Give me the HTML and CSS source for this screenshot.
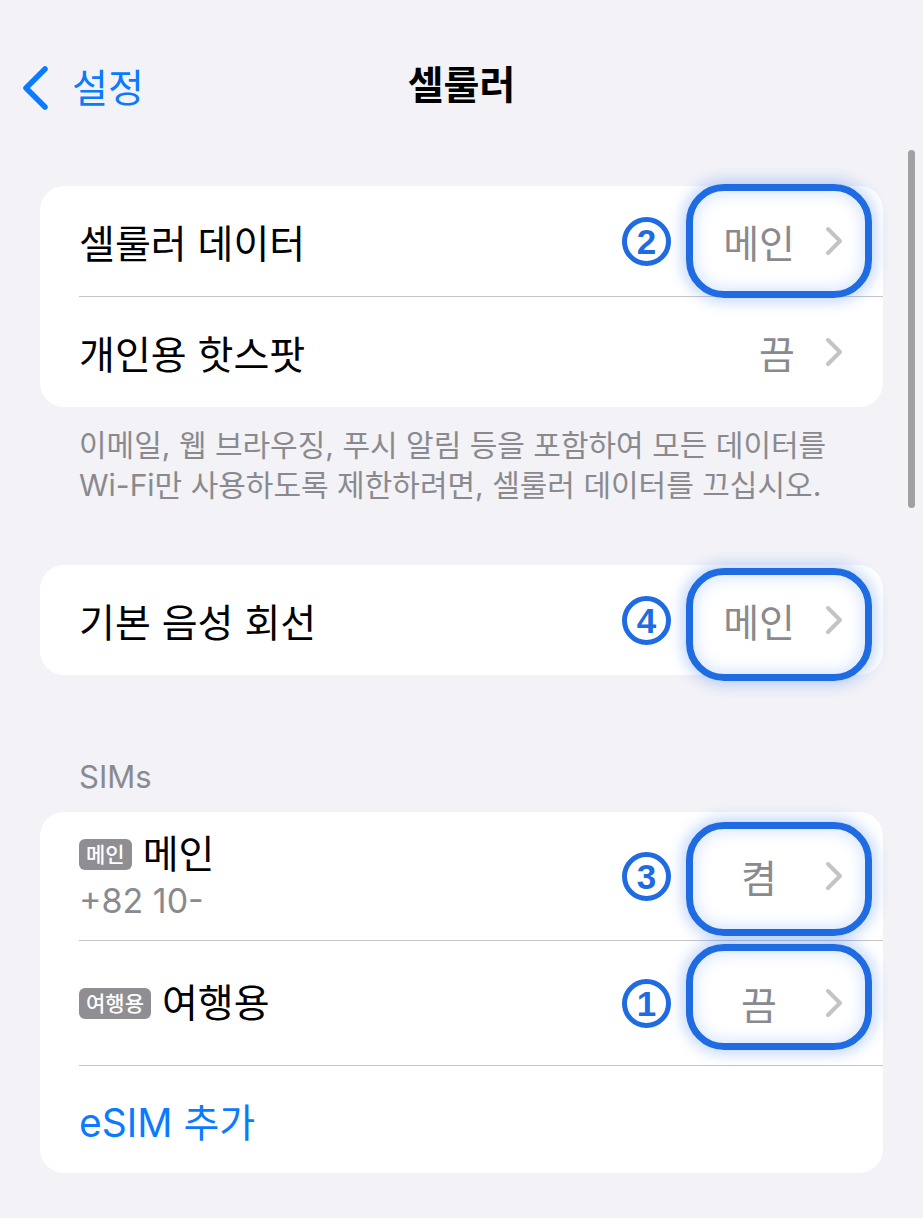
FILE: index.html
```html
<!DOCTYPE html>
<html lang="ko">
<head>
  <meta charset="UTF-8">
  <meta name="viewport" content="width=device-width, initial-scale=1.0">
  <title>셀룰러</title>
  <link rel="stylesheet" href="styles.css">
</head>
<body>

  <div class="nav">
    <a class="back" href="#">
      <svg class="back-icon" width="30" height="46" viewBox="0 0 30 46">
        <polyline points="25,4 6,23 25,42" fill="none" stroke="#0a7aff" stroke-width="5.5" stroke-linecap="round" stroke-linejoin="round"/>
      </svg>
      <span>설정</span>
    </a>
    <div class="nav-title">셀룰러</div>
  </div>

  <div class="scrollbar"></div>

  <div class="content">

    <div class="card">
      <div class="row">
        <span class="label">셀룰러 데이터</span>
        <span class="value">메인</span>
        <svg class="chev" width="18" height="30" viewBox="0 0 18 30"><polyline points="3,3 15,15 3,27"/></svg>
        <span class="num">2</span>
        <span class="mark mark-2"></span>
      </div>
      <div class="row">
        <span class="label">개인용 핫스팟</span>
        <span class="value">끔</span>
        <svg class="chev" width="18" height="30" viewBox="0 0 18 30"><polyline points="3,3 15,15 3,27"/></svg>
      </div>
    </div>

    <p class="footnote">이메일, 웹 브라우징, 푸시 알림 등을 포함하여 모든 데이터를<br>Wi-Fi만 사용하도록 제한하려면, 셀룰러 데이터를 끄십시오.</p>

    <div class="card card-voice">
      <div class="row">
        <span class="label">기본 음성 회선</span>
        <span class="value">메인</span>
        <svg class="chev" width="18" height="30" viewBox="0 0 18 30"><polyline points="3,3 15,15 3,27"/></svg>
        <span class="num">4</span>
        <span class="mark mark-4"></span>
      </div>
    </div>

    <div class="group-title">SIMs</div>

    <div class="card">
      <div class="row row-sim">
        <div class="sim">
          <div class="sim-name"><span class="badge">메인</span>메인</div>
          <div class="sim-number">+82 10-</div>
        </div>
        <span class="value value-sim">켬</span>
        <svg class="chev" width="18" height="30" viewBox="0 0 18 30"><polyline points="3,3 15,15 3,27"/></svg>
        <span class="num">3</span>
        <span class="mark mark-3"></span>
      </div>
      <div class="row row-travel">
        <div class="sim-name"><span class="badge">여행용</span>여행용</div>
        <span class="value value-sim">끔</span>
        <svg class="chev" width="18" height="30" viewBox="0 0 18 30"><polyline points="3,3 15,15 3,27"/></svg>
        <span class="num">1</span>
        <span class="mark mark-1"></span>
      </div>
      <div class="row row-add">
        <span class="link">eSIM 추가</span>
      </div>
    </div>

  </div>

</body>
</html>
```

FILE: styles.css
```css
body {
  margin: 0;
  background: #f2f2f7;
  font-family: Inter, "Noto Sans CJK KR", sans-serif;
  color: #000;
}
.nav {
  position: relative;
  height: 56px;
  padding-top: 60px;
  display: flex;
  align-items: center;
  justify-content: center;
}
.back {
  position: absolute;
  left: 20px;
  top: 65px;
  display: flex;
  align-items: center;
  gap: 22px;
  color: #0a7aff;
  text-decoration: none;
  font-size: 39px;
  line-height: 46px;
}
.back-icon {
  display: block;
}
.nav-title {
  font-size: 39px;
  font-weight: 700;
  line-height: 46px;
  margin-top: -6px;
}
.scrollbar {
  position: absolute;
  left: 908px;
  top: 150px;
  width: 7px;
  height: 358px;
  border-radius: 4px;
  background: #a1a1a3;
}
.content {
  padding: 70px 40px 40px;
}
.card {
  background: #fff;
  border-radius: 24px;
}
.row {
  position: relative;
  display: flex;
  align-items: center;
  height: 110px;
  margin-left: 39px;
  padding-right: 40px;
  border-bottom: 1px solid #c6c6c8;
}
.row:last-child {
  border-bottom: none;
}
.label {
  flex: 1;
  font-size: 39px;
}
.value {
  font-size: 39px;
  color: #8a8a8e;
  margin-right: 30px;
}
.value-sim {
  margin-right: 48px;
}
.chev {
  display: block;
  fill: none;
  stroke: #c4c4c7;
  stroke-width: 4;
  stroke-linecap: round;
  stroke-linejoin: round;
}
.num {
  position: absolute;
  right: 212px;
  top: 50%;
  width: 39px;
  height: 39px;
  margin-top: -24px;
  border: 5px solid #1f6be2;
  border-radius: 50%;
  color: #1f6be2;
  font-family: "Liberation Sans", sans-serif;
  font-weight: 700;
  font-size: 35px;
  line-height: 40px;
  text-align: center;
}
.mark {
  position: absolute;
  right: 11px;
  width: 172px;
  border: 7px solid #1f6be2;
  border-radius: 38px;
  box-shadow: 0 0 14px 4px rgba(40, 110, 240, 0.28), inset 0 0 14px 4px rgba(40, 110, 240, 0.16);
}
.mark-2 { top: -2px; bottom: -2px; }
.mark-4 { top: 3px; bottom: -6px; }
.mark-3 { top: 10px; bottom: 4px; }
.mark-1 { top: 3px; bottom: 15px; }
.footnote {
  margin: 18px 0 60px 39px;
  font-size: 30px;
  line-height: 40px;
  color: #8a8a8e;
}
.group-title {
  margin: 84px 0 17px 39px;
  font-size: 31px;
  line-height: 36px;
  color: #8a8a8e;
}
.row-sim {
  height: 128px;
}
.row-travel {
  height: 124px;
}
.row-add {
  height: 107px;
}
.sim {
  flex: 1;
}
.row-travel .sim-name {
  flex: 1;
}
.sim-name {
  display: flex;
  align-items: center;
  font-size: 39px;
  line-height: 46px;
}
.badge {
  display: inline-block;
  padding: 0 7px;
  margin-right: 11px;
  height: 31px;
  line-height: 31px;
  border-radius: 6px;
  background: #8e8e93;
  color: #fff;
  font-size: 21px;
  font-weight: 500;
}
.sim-number {
  margin-top: 4px;
  font-size: 34px;
  line-height: 40px;
  color: #8a8a8e;
}
.link {
  font-size: 39px;
  color: #0a7aff;
}
```
